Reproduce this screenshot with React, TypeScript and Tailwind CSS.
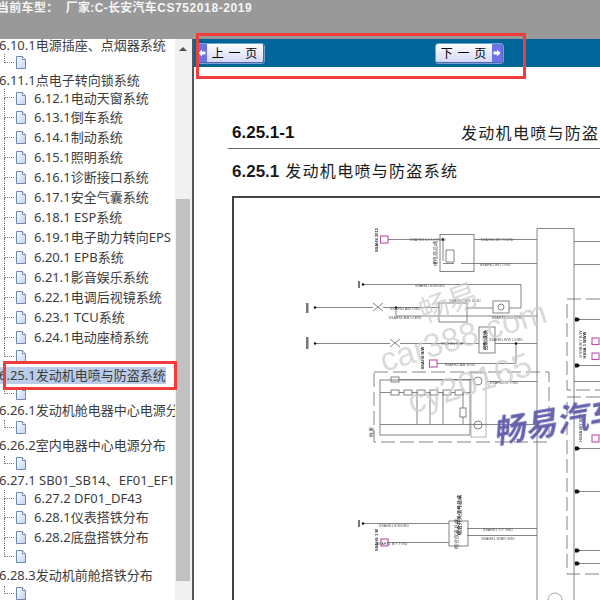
const rows = [
  { kind: 'parent', h: 'h-[17px]', text: '6.10.1电源插座、点烟器系统' },
  { kind: 'leaf', h: 'h-[18px]' },
  { kind: 'parent', h: 'h-[17px]', text: '6.11.1点电子转向锁系统' },
  { kind: 'child', h: 'h-[19px]', text: '6.12.1电动天窗系统' },
  { kind: 'child', h: 'h-[20px]', text: '6.13.1倒车系统' },
  { kind: 'child', h: 'h-[20px]', text: '6.14.1制动系统' },
  { kind: 'child', h: 'h-[20px]', text: '6.15.1照明系统' },
  { kind: 'child', h: 'h-[20px]', text: '6.16.1诊断接口系统' },
  { kind: 'child', h: 'h-[20px]', text: '6.17.1安全气囊系统' },
  { kind: 'child', h: 'h-[20px]', text: '6.18.1 ESP系统' },
  { kind: 'child', h: 'h-[20px]', text: '6.19.1电子助力转向EPS' },
  { kind: 'child', h: 'h-[20px]', text: '6.20.1 EPB系统' },
  { kind: 'child', h: 'h-[20px]', text: '6.21.1影音娱乐系统' },
  { kind: 'child', h: 'h-[20px]', text: '6.22.1电调后视镜系统' },
  { kind: 'child', h: 'h-[20px]', text: '6.23.1 TCU系统' },
  { kind: 'child', h: 'h-[20px]', text: '6.24.1电动座椅系统' },
  { kind: 'leaf', h: 'h-[18px]' },
  { kind: 'selected', h: 'h-[20px]', text: '6.25.1发动机电喷与防盗系统' },
  { kind: 'leaf', h: 'h-[16px]' },
  { kind: 'parent', h: 'h-[18px]', text: '6.26.1发动机舱电器中心电源分布' },
  { kind: 'leaf', h: 'h-[16px]' },
  { kind: 'parent', h: 'h-[20px]', text: '6.26.2室内电器中心电源分布' },
  { kind: 'leaf', h: 'h-[16px]' },
  { kind: 'parent', h: 'h-[18px]', text: '6.27.1 SB01_SB14、EF01_EF12' },
  { kind: 'child', h: 'h-[18px]', text: '6.27.2 DF01_DF43' },
  { kind: 'child', h: 'h-[20px]', text: '6.28.1仪表搭铁分布' },
  { kind: 'child', h: 'h-[20px]', text: '6.28.2底盘搭铁分布' },
  { kind: 'leaf', h: 'h-[18px]' },
  { kind: 'parent', h: 'h-[20px]', text: '6.28.3发动机前舱搭铁分布' },
  { kind: 'leaf', h: 'h-[16px]' },
];

const PageIcon = () => (
  <svg width="12" height="15" viewBox="0 0 12 15" className="shrink-0">
    <defs>
      <linearGradient id="pg" x1="0" y1="0" x2="1" y2="1">
        <stop offset="0" stopColor="#ffffff" />
        <stop offset="1" stopColor="#bcd4f6" />
      </linearGradient>
    </defs>
    <path d="M1.5 1.5h6l3 3v9h-9z" fill="url(#pg)" stroke="#7089b4" />
    <path d="M7.5 1.5v3h3" fill="#fff" stroke="#7089b4" />
  </svg>
);

const Connector = ({ last }: { last: boolean }) => (
  <div className="ml-[4px] mr-[1px] flex h-full w-[10px] shrink-0 flex-col">
    <div className="h-1/2 border-b border-l border-dotted border-[#777]" />
    <div className={last ? 'h-1/2' : 'h-1/2 border-l border-dotted border-[#777]'} />
  </div>
);

const NavButton = ({ dir, label }: { dir: 'prev' | 'next'; label: string }) => {
  const arrow = (
    <span className="flex h-full w-[10px] items-center justify-center bg-[#6d72e4]">
      <svg width="8" height="8" viewBox="0 0 8 8">
        {dir === 'prev' ? (
          <path d="M0.5 4 4 0.5V2.5H7.5V5.5H4V7.5z" fill="#fff" />
        ) : (
          <path d="M7.5 4 4 0.5V2.5H0.5V5.5H4V7.5z" fill="#fff" />
        )}
      </svg>
    </span>
  );
  return (
    <button className="flex h-[19px] w-[67px] items-center overflow-hidden rounded-[2px] border-b border-r border-[#5a5fb8] bg-[linear-gradient(#ffffff,#d5d9f6)] shadow-[0_0_0_0.5px_#dfe3ff]">
      {dir === 'prev' && arrow}
      <span className="flex-1 whitespace-pre text-center font-['Noto_Sans_CJK_SC',sans-serif] text-[12px] leading-none tracking-[1px] text-black">
        {label}
      </span>
      {dir === 'next' && arrow}
    </button>
  );
};

const labels = [
  { x: 428, y: 241, t: 'SSAHS1 0.5 L/O/GRD' },
  { x: 497, y: 241, t: 'SSAHS1 BR Y/GRD' },
  { x: 495, y: 266, t: 'SSAHS1 B/R L/GD' },
  { x: 430, y: 287, t: 'SSAHS1 B B/GRD' },
  { x: 405, y: 310, t: 'SSAHS1 A/B L/GD' },
  { x: 405, y: 319, t: 'SSAHS1 A/B L/GRD' },
  { x: 465, y: 302, t: 'SSAHS1 B/G U/GD' },
  { x: 507, y: 319, t: 'SSAHS1 B/G B/GD' },
  { x: 452, y: 345, t: 'SSAHS1 B/W' },
  { x: 506, y: 341, t: 'SSAHS1 B/W L/GRD' },
  { x: 460, y: 366, t: 'SSAHS1 A/B B/GD' },
  { x: 504, y: 384, t: 'SSAHS1 W Y/GD' },
  { x: 394, y: 527, t: 'SSAHS1 B B/GRD' },
  { x: 392, y: 545, t: 'SSAHS1 B/Y Y/GD' },
  { x: 498, y: 531, t: 'SSAHS1 Y/Y GRD' },
  { x: 498, y: 540, t: 'SSAHS1 W/BR GRD' },
];

const WiringDiagram = () => (
  <svg width="366" height="402" viewBox="234 198 366 402" className="block">
    <g className="blur-[0.3px]" fill="none" stroke="#777" strokeWidth="0.9">
      {/* main block */}
      <path d="M537 600V228.5H574V600" />
      {/* top circuit */}
      <path d="M388 239.500H440M474 239.500H537M474 263.500H537" />
      <rect x="440" y="234.500" width="34" height="37" />
      <path d="M443 239.500V261M443 263.500H454M461 263.500H474M446 250H454V262H446z" />
      <path d="M363 284.500H521V308H509M493 308H467M315 307.500H373M383 307.500H439M396 307.500V316H537" />
      <rect x="439" y="303" width="28" height="19" />
      <rect x="493" y="301" width="16" height="12" />
      <circle cx="501" cy="307" r="3" />
      <path d="M373 303 383 311M373 311 383 303" />
      <path d="M315 343.500H390M400 343.500H479M495 343.500H537M516 343.500V363.500H437" />
      <path d="M390 347 400 339M390 339 400 347" />
      <rect x="479" y="327" width="16" height="26" />
      {/* dashed module */}
      <path d="M374 372H549V442H374z" strokeDasharray="14 5" />
      <rect x="380" y="380" width="90" height="55" />
      <rect x="471" y="373" width="15" height="64" stroke="#aaa" />
      <path d="M380 392.500H391M399 392.500H404M412 392.500H417M425 392.500H430M438 392.500H443M451 392.500H455M463 392.500H470M399 379.500H474" />
      <path d="M380 424.500H537M487 381.500H537M417 392V424M430 392V424M443 392V424M463 392V408M463 417V424" />
      {[391, 404, 417, 430, 443, 455].map((x) => (
        <rect key={x} x={x} y="390" width="8" height="5" />
      ))}
      <rect x="391" y="377" width="8" height="5" />
      <rect x="460" y="408" width="6" height="9" />
      <circle cx="478" cy="381" r="4" />
      <circle cx="478" cy="425" r="4" />
      {/* lower circuit */}
      <path d="M363 523.500H449M388 542.500H449M467 528.500H537M467 535.500H537" />
      <rect x="449" y="521" width="19" height="25" />
      {/* right side */}
      <path d="M574 241.500H600M574 264.500H600M574 319.500H600M574 365.500H600M574 381.500H600M574 448.500H600M574 491.500H600M574 550.500H600M574 563.500H600" />
      <path d="M600 299H567V390H600" strokeDasharray="14 5" />
      <path d="M600 397H567V574H600" strokeDasharray="14 5" />
      <path d="M548 600a7 7 0 0 1 14 0" stroke="#999" />
    </g>
    {/* terminals */}
    <g className="blur-[0.3px]" fill="#111">
      <circle cx="363" cy="284.500" r="1.200" />
      <circle cx="315" cy="307.500" r="1.200" />
      <circle cx="315" cy="343.500" r="1.200" />
      <circle cx="363" cy="523.500" r="1.200" />
      <circle cx="396" cy="307.500" r="1.200" />
      <circle cx="516" cy="343.500" r="1.200" />
      <circle cx="443" cy="239.500" r="1.200" />
      <rect x="358" y="281" width="2" height="7" fill="#777" />
      <rect x="358" y="520" width="2" height="7" fill="#777" />
      <rect x="306" y="303" width="2.500" height="10" fill="#777" />
      <rect x="306" y="337" width="2.500" height="12" fill="#777" />
      {[319.5, 365.5, 448.5, 491.5, 550.5, 563.5].map((y) => (
        <path key={y} d={`M575 ${y - 2}h3l2 2l-2 2h-3z`} />
      ))}
    </g>
    {/* connector pins */}
    <g fill="#fff" stroke="#c04fa8" strokeWidth="1.100">
      <rect x="380.500" y="236" width="7.500" height="7" />
      <rect x="429.500" y="360" width="7.500" height="7" />
      <rect x="381" y="539" width="7" height="7" />
      <rect x="592" y="338" width="7" height="6.500" />
      <rect x="592" y="353" width="7" height="6.500" />
      <rect x="592" y="435" width="7" height="7" />
    </g>
    {/* tiny blurred labels */}
    <g className="blur-[0.35px]" fill="#555" fontFamily="Liberation Sans, sans-serif" fontSize="3.600">
      {labels.map((l) => (
        <text key={l.t + l.x + l.y} x={l.x} y={l.y} textAnchor="middle">
          {l.t}
        </text>
      ))}
      <text transform="translate(378 240) rotate(-90)" textAnchor="middle" fontWeight="700" fill="#222" fontSize="4">
        SSAHS 2015
      </text>
      <text transform="translate(424 358) rotate(-90)" textAnchor="middle" fontWeight="700" fill="#222" fontSize="4">
        SSAHS B/W
      </text>
      <text transform="translate(378 540) rotate(-90)" textAnchor="middle" fontWeight="700" fill="#222" fontSize="4">
        SSAHS 1 W
      </text>
      <text transform="translate(586 345) rotate(-90)" textAnchor="middle" fontWeight="700" fill="#222" fontSize="4">
        HSSA 1 WWW
      </text>
      <text transform="translate(582 344) rotate(-90)" textAnchor="middle" fontSize="4">
        HSSA B/Y B/W
      </text>
      <text transform="translate(582 428) rotate(-90)" textAnchor="middle" fontSize="4" fontWeight="700">
        HSSA B/Y B/W
      </text>
      <text transform="translate(437 253) rotate(-90)" textAnchor="middle" fontSize="5" fill="#333">
        继电器总成
      </text>
      <text transform="translate(487 340) rotate(-90)" textAnchor="middle" fontSize="4.500" fill="#222" fontWeight="700">
        控制模块
      </text>
      <text transform="translate(458 534) rotate(-90)" textAnchor="middle" fontSize="4.500" fill="#333">
        组合仪表总成
      </text>
      <text transform="translate(461 515) rotate(-90)" textAnchor="middle" fontSize="5" fontWeight="700" fill="#222">
        组合开关信号总成
      </text>
      <text transform="translate(373 432) rotate(-90)" textAnchor="middle" fontSize="5" fill="#333">
        线束
      </text>
    </g>
    {/* watermarks */}
    <g fontFamily="Liberation Sans, Noto Sans CJK SC, sans-serif">
      <text transform="translate(424 323) rotate(-20)" fontSize="30" fill="#cdcdcd" fillOpacity="0.75" fontFamily="Noto Sans CJK SC, sans-serif">
        畅易
      </text>
      <text transform="translate(384 372) rotate(-17)" fontSize="33" fill="#cdcdcd" fillOpacity="0.75">
        car388.com
      </text>
      <text transform="translate(412 414) rotate(-18)" fontSize="34" fill="#cdcdcd" fillOpacity="0.75">
        cy20165
      </text>
      <text transform="translate(495 444) rotate(-10)" fontSize="32" fontWeight="700" fontStyle="italic" fill="#6662ae" fontFamily="Noto Sans CJK SC, sans-serif">
        畅易汽车
      </text>
    </g>
  </svg>
);

export default function App() {
  return (
    <div className="relative flex h-[600px] w-[600px] flex-col overflow-hidden bg-white font-['Liberation_Sans','Noto_Sans_CJK_SC',sans-serif]">
      {/* top bar */}
      <div className="h-[39px] shrink-0 bg-[#999999]">
        <p className="-ml-[3px] whitespace-pre pt-[1px] text-[12px] font-bold leading-[14px] tracking-[0.3px] text-[#f5f5f5]">
          当前车型：  厂家:C-长安汽车<span className="tracking-[0.6px]">CS752018-2019</span>
        </p>
      </div>

      <div className="flex min-h-0 flex-1">
        {/* tree */}
        <div className="flex w-[192px] shrink-0">
          <div className="-mt-[2.5px] w-[175px] shrink-0 overflow-hidden font-['Noto_Sans','Noto_Sans_CJK_SC',sans-serif] text-[13px] text-[#3c3c3c]">
            {rows.map((r, i) => {
              const nextKind = rows[i + 1]?.kind;
              if (r.kind === 'leaf' || r.kind === 'child') {
                return (
                  <div key={i} className={`flex items-center ${r.h}`}>
                    <Connector last={r.kind === 'leaf' || nextKind === 'parent'} />
                    <PageIcon />
                    {r.text && <span className="ml-[7px] whitespace-nowrap leading-none">{r.text}</span>}
                  </div>
                );
              }
              return (
                <div key={i} className={`-ml-[1px] flex items-center whitespace-nowrap leading-none ${r.h}`}>
                  <span className={r.kind === 'selected' ? 'bg-[#b9cde8] py-[2px]' : ''}>{r.text}</span>
                </div>
              );
            })}
          </div>
          {/* scrollbar */}
          <div className="flex w-[17px] shrink-0 flex-col bg-[#f1f1f1] pl-[1px] pr-[2px]">
            <div className="flex h-[19px] shrink-0 items-center justify-center">
              <div className="h-0 w-0 border-x-[4px] border-b-[4px] border-x-transparent border-b-[#505050]" />
            </div>
            <div className="mt-[141px] h-[382px] shrink-0 bg-[#c1c1c1]" />
          </div>
        </div>

        {/* splitter */}
        <div className="w-[2px] shrink-0 bg-[#555555]" />

        {/* document */}
        <div className="min-w-0 flex-1 overflow-hidden bg-white">
          <div className="flex h-[28px] items-center bg-[#006699] pl-[3px]">
            <NavButton dir="prev" label="上 一 页" />
            <div className="ml-[172px]">
              <NavButton dir="next" label="下 一 页" />
            </div>
          </div>

          <div className="ml-[38px] mt-[57px] flex h-[16px] w-[420px] items-center">
            <span className="w-[229px] shrink-0 text-[17px] font-bold leading-none text-[#111]">6.25.1-1</span>
            <span className="mt-[3px] whitespace-nowrap text-[16px] leading-none tracking-[1.3px] text-[#222]">
              发动机电喷与防盗系统
            </span>
          </div>
          <div className="ml-[34px] mt-[8px] h-[1px] w-[400px] bg-[#666]" />
          <div className="ml-[38px] mt-[14px] flex h-[17px] items-center whitespace-nowrap text-[#1a1a1a]">
            <span className="text-[17px] font-bold leading-none">6.25.1</span>
            <span className="ml-[6px] text-[16px] leading-none tracking-[1.3px]">发动机电喷与防盗系统</span>
          </div>

          <div className="ml-[38px] mt-[16px] w-[420px] border-l-2 border-t-2 border-[#444]">
            <WiringDiagram />
          </div>
        </div>
      </div>

      {/* red annotations */}
      <div className="absolute left-[196px] top-[33px] h-[46px] w-[330px] border-[3px] border-[#f23c3c]" />
      <div className="absolute left-[3px] top-[361px] h-[29px] w-[174px] border-[3px] border-[#f23c3c]" />
    </div>
  );
}
